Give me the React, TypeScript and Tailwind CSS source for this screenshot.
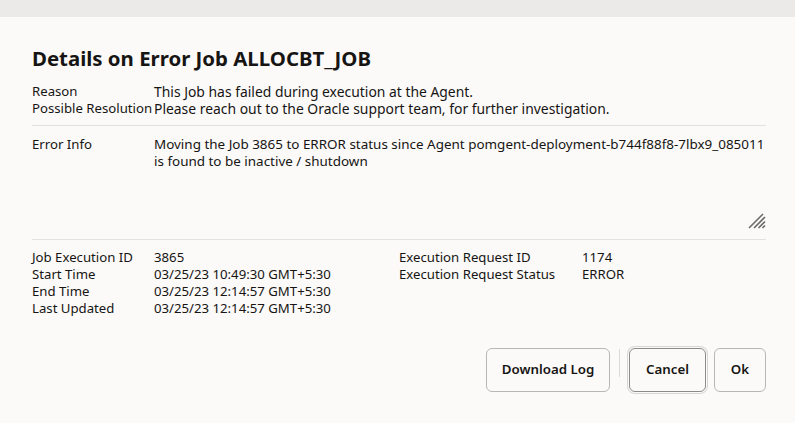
import React from "react";

const font = { fontFamily: '"Noto Sans", "Open Sans", Arial, sans-serif' };

function Row({ label, value, w = "w-[122px]", vs = "text-[13.2px]" }: { label: string; value: string; w?: string; vs?: string }) {
  return (
    <div className="flex h-[17px] items-center">
      <div className={`${w} shrink-0 whitespace-nowrap text-[13.2px] leading-[17px]`}>{label}</div>
      <div className={`whitespace-nowrap leading-[17px] ${vs}`}>{value}</div>
    </div>
  );
}

export default function App() {
  return (
    <div className="w-[795px] h-[423px] bg-[#fcfaf9] text-[#161513] flex flex-col overflow-hidden" style={font}>
      <div className="h-[17px] bg-[#ebeae8] shrink-0" />
      <div className="pl-[32px] pr-[29px] flex flex-col">
        <h1 className="mt-[27px] h-[28px] leading-[28px] text-[20.4px] font-bold">
          Details on Error Job ALLOCBT_JOB
        </h1>
        <div className="mt-[11px] flex flex-col">
          <Row label="Reason" value="This Job has failed during execution at the Agent." vs="text-[13.9px]" />
          <Row label="Possible Resolution" value="Please reach out to the Oracle support team, for further investigation." vs="text-[13.9px]" />
        </div>
        <div className="mt-[8px] h-px bg-[#e4e2e0]" />
        <div className="flex pt-[10px] h-[113px]">
          <div className="w-[122px] shrink-0 leading-[17px] text-[13.2px]">Error Info</div>
          <div className="flex-1 flex flex-col">
            <div className="leading-[17px] text-[13.45px]">
              <span className="whitespace-nowrap">Moving the Job 3865 to ERROR status since Agent pomgent-deployment-b744f88f8-7lbx9_085011</span>
              <br />
              is found to be inactive / shutdown
            </div>
            <div className="mt-auto mb-[10px] flex justify-end">
              <svg width="18" height="18" viewBox="0 0 18 18" fill="none" stroke="#6b6a68" strokeWidth="1.6">
                <line x1="1" y1="17" x2="15" y2="3" />
                <line x1="6" y1="17" x2="17" y2="6" />
                <line x1="10.5" y1="17" x2="17" y2="10.5" />
                <line x1="14.5" y1="17" x2="17" y2="14.5" />
              </svg>
            </div>
          </div>
        </div>
        <div className="h-px bg-[#e4e2e0]" />
        <div className="mt-[9px] flex">
          <div className="w-[367px] flex flex-col">
            <Row label="Job Execution ID" value="3865" />
            <Row label="Start Time" value="03/25/23 10:49:30 GMT+5:30" />
            <Row label="End Time" value="03/25/23 12:14:57 GMT+5:30" />
            <Row label="Last Updated" value="03/25/23 12:14:57 GMT+5:30" />
          </div>
          <div className="flex flex-col">
            <Row label="Execution Request ID" value="1174" w="w-[183px]" />
            <Row label="Execution Request Status" value="ERROR" w="w-[183px]" />
          </div>
        </div>
        <div className="mt-[31px] flex justify-end items-start text-[13.3px] font-semibold">
          <button className="h-[44px] w-[124px] rounded-[6px] border border-[#b9b7b4] bg-[#fcfaf9]">Download Log</button>
          <div className="mx-[9px] mt-[1px] w-px h-[28px] bg-[#dcdad7]" />
          <button className="h-[44px] w-[77px] rounded-[6px] border border-[#8d8b88] ring-1 ring-[#d8d6d3] ring-offset-1 ring-offset-[#fcfaf9] bg-[#fcfaf9]">Cancel</button>
          <button className="ml-[8px] h-[44px] w-[52px] rounded-[6px] border border-[#b9b7b4] bg-[#fcfaf9]">Ok</button>
        </div>
      </div>
    </div>
  );
}
